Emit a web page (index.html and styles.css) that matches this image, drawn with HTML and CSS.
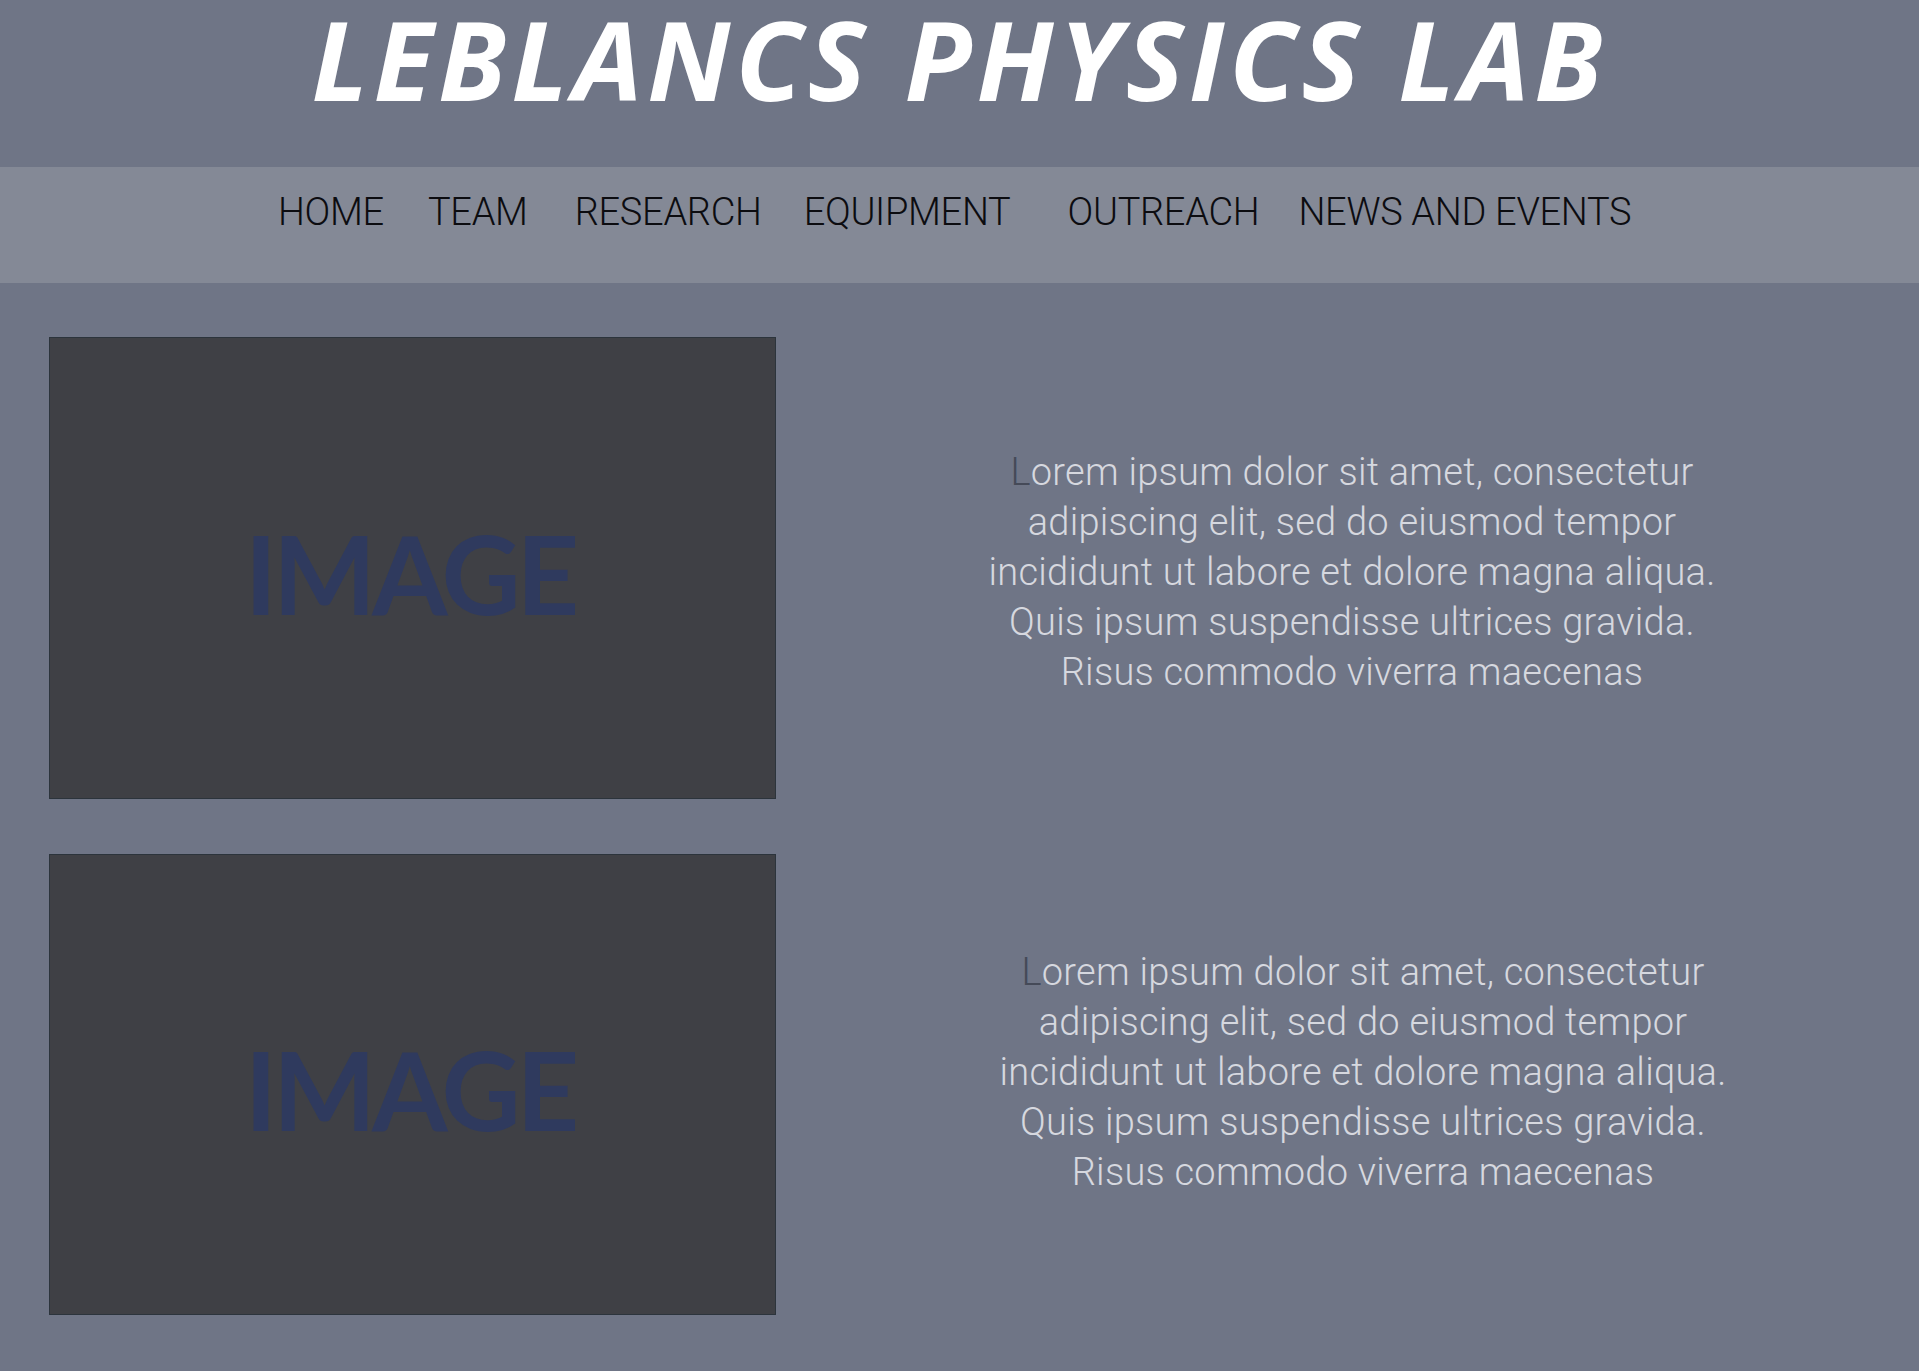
FILE: index.html
```html
<!DOCTYPE html>
<html lang="en">
<head>
<meta charset="utf-8">
<title>LeBlancs Physics Lab</title>
<link rel="stylesheet" href="styles.css">
</head>
<body>
<header class="masthead">
  <h1 class="title">LEBLANCS PHYSICS LAB</h1>
</header>
<nav class="nav">
  <a class="nav-item nav-home" href="#">HOME</a>
  <a class="nav-item nav-team" href="#">TEAM</a>
  <a class="nav-item nav-research" href="#">RESEARCH</a>
  <a class="nav-item nav-equipment" href="#">EQUIPMENT</a>
  <a class="nav-item nav-outreach" href="#">OUTREACH</a>
  <a class="nav-item nav-news" href="#">NEWS AND EVENTS</a>
</nav>
<main class="content">
  <section class="row row-first">
    <div class="image-box"><span class="image-label">IMAGE</span></div>
    <div class="text-col">
      <p class="blurb"><span class="dim">L</span>orem ipsum dolor sit amet, consectetur<br>adipiscing elit, sed do eiusmod tempor<br>incididunt ut labore et dolore magna aliqua.<br>Quis ipsum suspendisse ultrices gravida.<br>Risus commodo viverra maecenas</p>
    </div>
  </section>
  <section class="row row-second">
    <div class="image-box"><span class="image-label">IMAGE</span></div>
    <div class="text-col">
      <p class="blurb"><span class="dim">L</span>orem ipsum dolor sit amet, consectetur<br>adipiscing elit, sed do eiusmod tempor<br>incididunt ut labore et dolore magna aliqua.<br>Quis ipsum suspendisse ultrices gravida.<br>Risus commodo viverra maecenas</p>
    </div>
  </section>
</main>
</body>
</html>
```
FILE: styles.css
```css
html, body {
  margin: 0;
  padding: 0;
}
body {
  background: #6f7586;
  font-family: Roboto, "Liberation Sans", sans-serif;
  min-height: 1371px;
}
.masthead {
  height: 167px;
  box-sizing: border-box;
  padding-top: 3px;
  display: flex;
  justify-content: center;
}
.title {
  margin: 0;
  font-family: "Open Sans", "Liberation Sans", sans-serif;
  font-weight: 700;
  font-style: italic;
  font-size: 110px;
  line-height: 110px;
  color: #ffffff;
  letter-spacing: 5px;
  white-space: nowrap;
}
.nav {
  height: 116px;
  box-sizing: border-box;
  padding: 26px 0 0 278px;
  background: #848996;
  display: flex;
  justify-content: flex-start;
}
.nav-item {
  font-family: Roboto, "Liberation Sans", sans-serif;
  font-weight: 300;
  font-size: 38px;
  line-height: 38px;
  color: #0c0c10;
  text-decoration: none;
  white-space: nowrap;
  letter-spacing: -0.3px;
}
.nav-team { margin-left: 44px; }
.nav-research { margin-left: 47px; }
.nav-equipment { margin-left: 42px; }
.nav-outreach { margin-left: 57px; }
.nav-news { margin-left: 39px; }
.content {
  padding: 54px 0 0 49px;
  display: flex;
  flex-direction: column;
  gap: 55px;
}
.row {
  display: flex;
}
.image-box {
  width: 727px;
  height: 462px;
  box-sizing: border-box;
  background: #3f4045;
  border: 1px solid #2c343c;
  display: flex;
  align-items: center;
  justify-content: center;
}
.row-second .image-box {
  height: 461px;
}
.image-label {
  font-family: Lato, "Liberation Sans", sans-serif;
  font-weight: 700;
  font-size: 109px;
  line-height: 109px;
  color: #2f3a5e;
  letter-spacing: -4px;
  padding: 8px 5px 0 0;
}
.text-col {
  flex: 1;
  display: flex;
  justify-content: center;
}
.row-first .text-col {
  padding: 110px 0 0 9px;
}
.row-second .text-col {
  padding: 93px 0 0 31px;
}
.blurb {
  margin: 0;
  text-align: center;
  font-family: Roboto, "Liberation Sans", sans-serif;
  font-weight: 300;
  font-size: 38px;
  line-height: 50px;
  color: #d6d8df;
  letter-spacing: 0.25px;
  white-space: nowrap;
}
.dim {
  color: #454a58;
}
```
